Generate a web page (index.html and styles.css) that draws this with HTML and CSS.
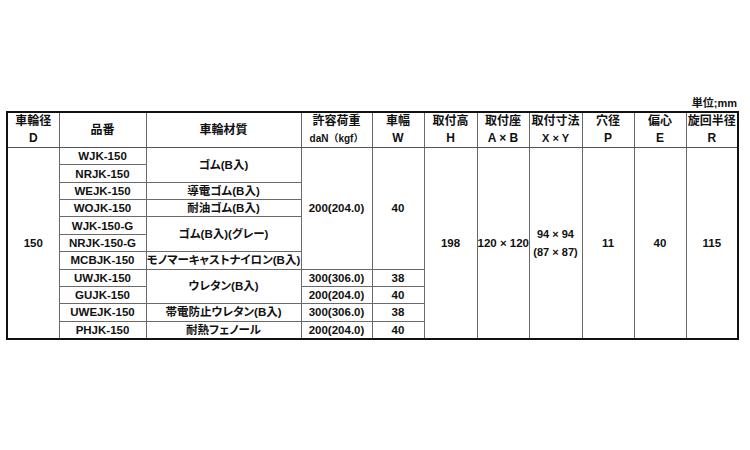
FILE: index.html
```html
<!DOCTYPE html>
<html lang="ja">
<head>
<meta charset="utf-8">
<title>車輪仕様</title>
<link rel="stylesheet" href="styles.css">
</head>
<body>
<div class="wrap">
  <div class="unit">単位;mm</div>
  <table class="spec">
    <colgroup>
      <col class="c52"><col class="c87"><col class="c155"><col class="c71">
      <col class="c52"><col class="c53"><col class="c52"><col class="c53">
      <col class="c52"><col class="c52"><col class="c52">
    </colgroup>
    <thead>
      <tr class="head">
        <th>車輪径<br>D</th>
        <th>品番</th>
        <th>車輪材質</th>
        <th>許容荷重<br><span class="sub">daN（kgf）</span></th>
        <th>車幅<br>W</th>
        <th>取付高<br>H</th>
        <th>取付座<br>A × B</th>
        <th>取付寸法<br><span class="xy">X × Y</span></th>
        <th>穴径<br>P</th>
        <th>偏心<br>E</th>
        <th>旋回半径<br>R</th>
      </tr>
    </thead>
    <tbody>
      <tr class="row">
        <td rowspan="11">150</td>
        <td>WJK-150</td>
        <td rowspan="2" class="jp">ゴム(B入)</td>
        <td rowspan="7">200(204.0)</td>
        <td rowspan="7">40</td>
        <td rowspan="11">198</td>
        <td rowspan="11">120 × 120</td>
        <td rowspan="11" class="xyv">94 × 94<br>(87 × 87)</td>
        <td rowspan="11">11</td>
        <td rowspan="11">40</td>
        <td rowspan="11">115</td>
      </tr>
      <tr class="row"><td>NRJK-150</td></tr>
      <tr class="row"><td>WEJK-150</td><td class="jp">導電ゴム(B入)</td></tr>
      <tr class="row"><td>WOJK-150</td><td class="jp">耐油ゴム(B入)</td></tr>
      <tr class="row"><td>WJK-150-G</td><td rowspan="2" class="jp">ゴム(B入)(グレー)</td></tr>
      <tr class="row"><td>NRJK-150-G</td></tr>
      <tr class="row"><td>MCBJK-150</td><td class="jp">モノマーキャストナイロン(B入)</td></tr>
      <tr class="row"><td>UWJK-150</td><td rowspan="2" class="jp">ウレタン(B入)</td><td>300(306.0)</td><td>38</td></tr>
      <tr class="row"><td>GUJK-150</td><td>200(204.0)</td><td>40</td></tr>
      <tr class="row"><td>UWEJK-150</td><td class="jp">帯電防止ウレタン(B入)</td><td>300(306.0)</td><td>38</td></tr>
      <tr class="row"><td>PHJK-150</td><td class="jp">耐熱フェノール</td><td>200(204.0)</td><td>40</td></tr>
    </tbody>
  </table>
</div>
</body>
</html>
```

FILE: styles.css
```css
html, body {
  margin: 0;
  padding: 0;
  background: #ffffff;
}

body {
  font-family: "Liberation Sans", "Noto Sans CJK JP", sans-serif;
  color: #111111;
}

.wrap {
  width: 733px;
  padding: 97px 0 0 6px;
}

.unit {
  text-align: right;
  font-size: 11px;
  font-weight: bold;
  line-height: 13px;
  height: 14px;
  padding-right: 2px;
}

.spec {
  border-collapse: collapse;
  table-layout: fixed;
  width: 733px;
  border: 2px solid #111111;
}

.c52 { width: 52px; }
.c53 { width: 53px; }
.c71 { width: 71px; }
.c87 { width: 87px; }
.c155 { width: 155px; }

.spec th,
.spec td {
  border: 1px solid #6a6a6a;
  padding: 0;
  text-align: center;
  vertical-align: middle;
  white-space: nowrap;
  overflow: hidden;
  font-weight: bold;
}

.spec th {
  font-size: 12px;
  line-height: 17px;
}

.head th {
  height: 34px;
  border-bottom: 1px solid #555555;
}

.spec td {
  font-size: 11.5px;
  line-height: 12px;
}

.row td {
  height: 16.36px;
}

.spec .jp {
  font-size: 11.5px;
  font-feature-settings: "palt";
}

.sub {
  font-size: 10px;
}

.xy {
  font-size: 11px;
}

.spec .xyv {
  font-size: 11px;
  line-height: 18px;
}
```
